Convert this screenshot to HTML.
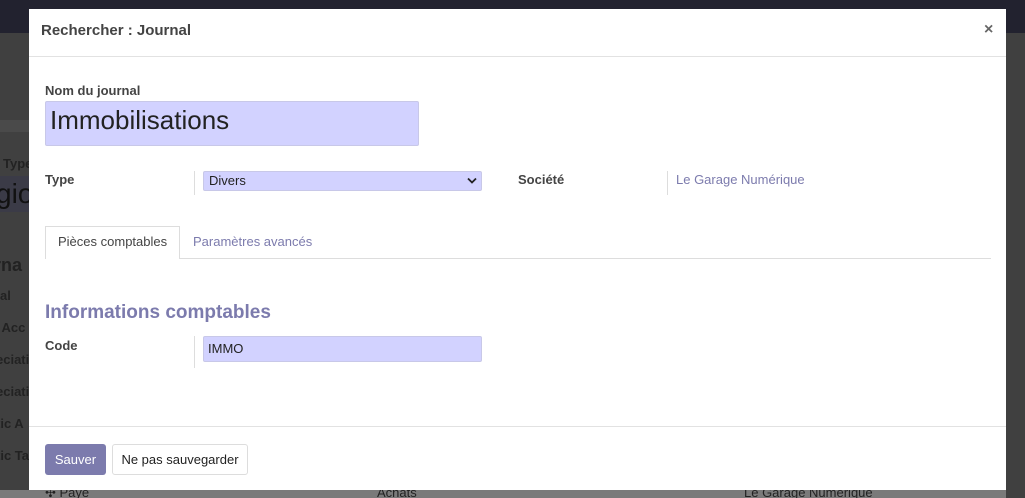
<!DOCTYPE html>
<html><head><meta charset="utf-8"><style>
*{box-sizing:border-box;margin:0;padding:0}
html,body{width:1025px;height:498px;overflow:hidden}
body{background:#404040;font-family:"Liberation Sans",sans-serif;position:relative;font-size:13px;color:#333}
.abs{position:absolute}
.modal{position:absolute;left:29px;top:9px;width:977px;height:481px;background:#fff}
.lbl{position:absolute;font-weight:bold;font-size:13px;color:#444}
.inp{position:absolute;background:#d2d2ff;border:1px solid #c8c8e8;border-radius:2px}
.sep{position:absolute;width:1px;background:#ddd}
</style></head><body>
<div class="abs" style="left:0;top:0;width:1025px;height:33px;background:#22222f"></div>
<div class="abs" style="left:0;top:120px;width:29px;height:12px;background:#4a4a4a"></div>
<div class="abs" style="left:3px;top:156px;font-weight:bold;color:#222;font-size:13px">Type</div>
<div class="abs" style="left:0;top:176px;width:29px;height:36px;background:#3b3b47"></div>
<div class="abs" style="left:-4px;top:178px;font-size:28px;color:#111">gio</div>
<div class="abs" style="left:-6px;top:255px;font-weight:bold;font-size:18px;color:#222">rna</div>
<div class="abs" style="left:0;top:288px;font-weight:bold;color:#222">al</div>
<div class="abs" style="left:-6px;top:320px;font-weight:bold;color:#222">: Acc</div>
<div class="abs" style="left:-4px;top:352px;font-weight:bold;color:#222">eciati</div>
<div class="abs" style="left:-4px;top:384px;font-weight:bold;color:#222">eciati</div>
<div class="abs" style="left:-4px;top:416px;font-weight:bold;color:#222">tic A</div>
<div class="abs" style="left:-4px;top:448px;font-weight:bold;color:#222">tic Ta</div>
<div class="abs" style="left:0;top:490px;width:1025px;height:8px;background:#7a7a7a"></div>
<div class="abs" style="left:1006px;top:490px;width:19px;height:8px;background:#404040"></div>
<div class="abs" style="left:45px;top:485px;color:#222">✣ Payé</div>
<div class="abs" style="left:377px;top:485px;color:#222">Achats</div>
<div class="abs" style="left:744px;top:485px;color:#222">Le Garage Numérique</div>

<div class="modal">
  <div class="abs" style="left:12px;top:13px;font-size:15px;font-weight:bold;color:#444">Rechercher : Journal</div>
  <div class="abs" style="left:955px;top:12px;font-size:16px;font-weight:bold;color:#666">×</div>
  <div class="abs" style="left:0;top:47px;width:977px;height:1px;background:#e2e2e2"></div>
  <div class="lbl" style="left:16px;top:74px">Nom du journal</div>
  <div class="inp" style="left:16px;top:92px;width:374px;height:45px"></div>
  <div class="abs" style="left:21px;top:96px;font-size:26px;color:#222">Immobilisations</div>
  <div class="lbl" style="left:16px;top:163px">Type</div>
  <div class="sep" style="left:165px;top:162px;height:24px"></div>
  <div class="inp" style="left:174px;top:162px;width:279px;height:20px"></div>
  <div class="abs" style="left:180px;top:164px;color:#222">Divers</div>
  <svg class="abs" style="left:438px;top:168px" width="10" height="8" viewBox="0 0 10 8"><path d="M1 1.5L5 5.5L9 1.5" stroke="#222" stroke-width="1.8" fill="none"/></svg>
  <div class="lbl" style="left:489px;top:163px">Société</div>
  <div class="sep" style="left:638px;top:162px;height:24px"></div>
  <div class="abs" style="left:647px;top:163px;color:#7c7bad">Le Garage Numérique</div>
  <div class="abs" style="left:16px;top:217px;width:135px;height:33px;border:1px solid #ddd;border-bottom:none;background:#fff"></div>
  <div class="abs" style="left:29px;top:225px;color:#444">Pièces comptables</div>
  <div class="abs" style="left:164px;top:225px;color:#7c7bad">Paramètres avancés</div>
  <div class="abs" style="left:151px;top:249px;width:811px;height:1px;background:#ddd"></div>
  <div class="abs" style="left:16px;top:293px;font-size:19px;font-weight:bold;color:#7c7bad">Informations comptables</div>
  <div class="lbl" style="left:16px;top:329px">Code</div>
  <div class="sep" style="left:165px;top:327px;height:32px"></div>
  <div class="inp" style="left:174px;top:327px;width:279px;height:26px"></div>
  <div class="abs" style="left:179px;top:332px;color:#222">IMMO</div>
  <div class="abs" style="left:0;top:417px;width:977px;height:1px;background:#e2e2e2"></div>
  <div class="abs" style="left:16px;top:435px;width:61px;height:31px;background:#7c7bad;border-radius:3px;color:#fff;line-height:31px;text-align:center">Sauver</div>
  <div class="abs" style="left:83px;top:435px;width:136px;height:31px;border:1px solid #ddd;border-radius:3px;color:#222;line-height:29px;text-align:center">Ne pas sauvegarder</div>
</div>
</body></html>
